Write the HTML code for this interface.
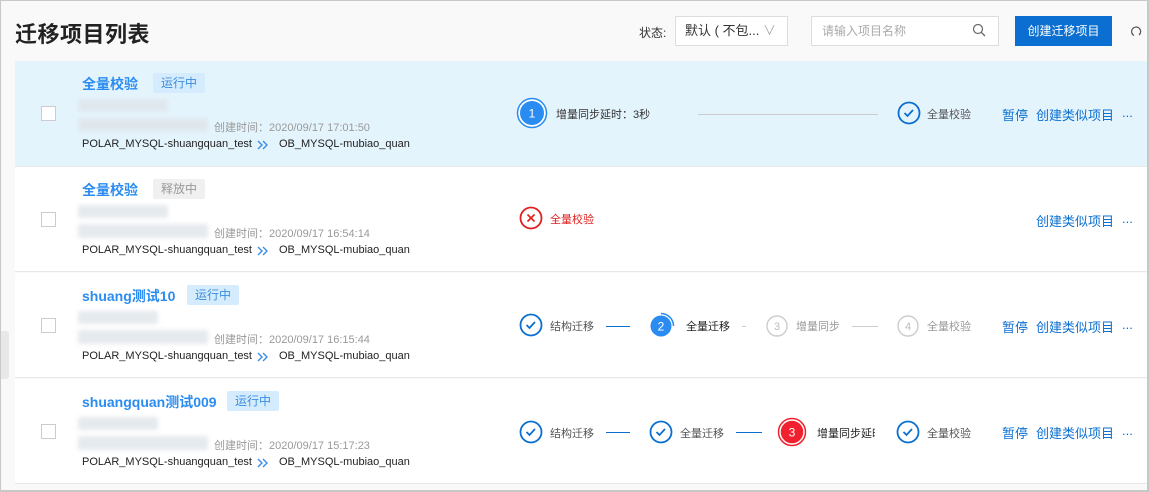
<!DOCTYPE html>
<html><head><meta charset="utf-8"><style>
*{margin:0;padding:0;box-sizing:border-box}
body{width:1149px;height:492px;overflow:hidden;background:#f9f9f9;font-family:"Liberation Sans","Noto Sans CJK SC",sans-serif;position:relative}
.frame{position:absolute;left:0;top:0;width:1149px;height:492px;border:1px solid #c8c8c8;border-right:2px solid #c8c8c8;border-bottom:2px solid #c8c8c8}
.a{position:absolute;white-space:nowrap}
h1{position:absolute;left:15px;top:17px;font-size:22px;font-weight:bold;color:#222;letter-spacing:0.5px}
.row{position:absolute;left:15px;width:1132px;height:105px;background:#fff;border-bottom:1px solid #e8e8e8}
.cb{position:absolute;left:26px;top:45px;width:15px;height:15px;border:1px solid #ccc;background:#fff}
.t{position:absolute;left:67px;top:13px;font-size:14px;font-weight:bold;color:#2a8cf0;white-space:nowrap}
.tag{position:absolute;top:12px;height:20px;line-height:20px;padding:0 8px;font-size:12px;border-radius:2px}
.run{background:#d4ecfd;color:#3b8de0}
.rel{background:#f0f0f0;color:#999}
.bl{position:absolute;left:63px;background:#dfe5ea;filter:blur(2px);opacity:.8}
.ct{position:absolute;left:199px;top:58px;font-size:11px;color:#999;white-space:nowrap}
.src{position:absolute;left:67px;top:77px;font-size:11px;color:#222;white-space:nowrap}
.dst{position:absolute;left:264px;top:77px;font-size:11px;color:#222;white-space:nowrap}
.st{position:absolute;font-size:11px;color:#555;white-space:nowrap}
.ln{position:absolute;height:1px;background:#0a6fd0;width:24px}
.gl{position:absolute;height:1px;background:#ccc}
.act{position:absolute;top:44px;font-size:13px;color:#0a6fd0;white-space:nowrap}
svg{position:absolute}
</style></head><body>
<h1>迁移项目列表</h1>
<div class="a" style="left:639px;top:24px;font-size:12px;color:#333">状态:</div>
<div class="a" style="left:675px;top:16px;width:113px;height:30px;border:1px solid #ddd;background:#fff;font-size:13px;color:#333;line-height:28px;padding-left:9px">默认 ( 不包... <span style="color:#aaa">∨</span></div>
<div class="a" style="left:811px;top:16px;width:188px;height:30px;border:1px solid #ddd;background:#fff;font-size:12px;color:#aaa;line-height:28px;padding-left:10px">请输入项目名称</div>
<svg style="left:972px;top:23px" width="14" height="14" viewBox="0 0 14 14"><circle cx="6" cy="6" r="4.5" fill="none" stroke="#666" stroke-width="1.2"/><path d="M9.3 9.3L13 13" stroke="#666" stroke-width="1.3"/></svg>
<div class="a" style="left:1015px;top:16px;width:97px;height:30px;background:#0a6fd0;color:#fff;font-size:12px;line-height:30px;text-align:center">创建迁移项目</div>
<svg style="left:1130px;top:25px" width="12" height="12" viewBox="0 0 12 12"><path d="M4 10.5A4.5 4.5 0 1 1 9 10" fill="none" stroke="#555" stroke-width="1.2"/></svg>

<div class="row" style="top:61px;background:#e4f4fd;height:106px">
<div class="cb" style="top:45px"></div>
<div class="t">全量校验</div><div class="tag run" style="left:138px">运行中</div>
<div class="bl" style="top:38px;width:90px;height:13px"></div><div class="bl" style="top:57px;width:130px;height:14px"></div>
<div class="ct" style="top:58px">创建时间：2020/09/17 17:01:50</div>
<div class="src">POLAR_MYSQL-shuangquan_test</div><svg style="left:242px;top:79px" width="12" height="10"><path d="M1 1l4 4-4 4M6 1l4 4-4 4" fill="none" stroke="#3b8de0" stroke-width="1.4"/></svg><div class="dst">OB_MYSQL-mubiao_quan</div>
<svg style="left:501px;top:36px" width="32" height="32"><circle cx="16" cy="16" r="13" fill="#2a8cf0" stroke="#fff" stroke-width="2"/><circle cx="16" cy="16" r="14.5" fill="none" stroke="#2a8cf0" stroke-width="1.5"/><text x="16" y="20.5" font-size="12" fill="#fff" text-anchor="middle" font-family="Liberation Sans">1</text></svg>
<div class="st" style="left:541px;top:45px;color:#333">增量同步延时：3秒</div>
<div class="gl" style="left:683px;top:53px;width:180px"></div>
<svg style="left:882px;top:40px" width="24" height="24"><circle cx="12" cy="12" r="10.5" fill="none" stroke="#0a6fd0" stroke-width="1.8"/><path d="M7.5 12l3 3 5.5-6" fill="none" stroke="#0a6fd0" stroke-width="1.8"/></svg>
<div class="st" style="left:912px;top:45px">全量校验</div>
<div class="act" style="left:987px">暂停</div><div class="act" style="left:1021px">创建类似项目</div><div class="act" style="left:1107px">...</div>
</div>

<div class="row" style="top:167px">
<div class="cb"></div>
<div class="t">全量校验</div><div class="tag rel" style="left:138px">释放中</div>
<div class="bl" style="top:38px;width:90px;height:13px"></div><div class="bl" style="top:57px;width:130px;height:14px"></div>
<div class="ct">创建时间：2020/09/17 16:54:14</div>
<div class="src">POLAR_MYSQL-shuangquan_test</div><svg style="left:242px;top:79px" width="12" height="10"><path d="M1 1l4 4-4 4M6 1l4 4-4 4" fill="none" stroke="#3b8de0" stroke-width="1.4"/></svg><div class="dst">OB_MYSQL-mubiao_quan</div>
<svg style="left:504px;top:39px" width="24" height="24"><circle cx="12" cy="12" r="10.5" fill="none" stroke="#e02020" stroke-width="1.8"/><path d="M8.5 8.5l7 7M15.5 8.5l-7 7" stroke="#e02020" stroke-width="1.6"/></svg>
<div class="st" style="left:535px;top:44px;color:#e02020">全量校验</div>
<div class="act" style="left:1021px">创建类似项目</div><div class="act" style="left:1107px">...</div>
</div>

<div class="row" style="top:273px">
<div class="cb"></div>
<div class="t">shuang测试10</div><div class="tag run" style="left:172px">运行中</div>
<div class="bl" style="top:38px;width:80px;height:13px"></div><div class="bl" style="top:57px;width:130px;height:14px"></div>
<div class="ct">创建时间：2020/09/17 16:15:44</div>
<div class="src">POLAR_MYSQL-shuangquan_test</div><svg style="left:242px;top:79px" width="12" height="10"><path d="M1 1l4 4-4 4M6 1l4 4-4 4" fill="none" stroke="#3b8de0" stroke-width="1.4"/></svg><div class="dst">OB_MYSQL-mubiao_quan</div>
<svg style="left:504px;top:40px" width="24" height="24"><circle cx="12" cy="12" r="10.5" fill="none" stroke="#0a6fd0" stroke-width="1.8"/><path d="M7.5 12l3 3 5.5-6" fill="none" stroke="#0a6fd0" stroke-width="1.8"/></svg>
<div class="st" style="left:535px;top:45px">结构迁移</div>
<div class="ln" style="left:591px;top:53px"></div>
<svg style="left:632px;top:38px" width="30" height="30"><circle cx="14" cy="15" r="10.5" fill="#2a8cf0"/><path d="M14 2.5A12.5 12.5 0 0 1 26.5 15" fill="none" stroke="#2a8cf0" stroke-width="1.5"/><text x="14" y="19.5" font-size="12" fill="#fff" text-anchor="middle" font-family="Liberation Sans">2</text></svg>
<div class="st" style="left:671px;top:45px;color:#222">全量迁移</div>
<div class="gl" style="left:727px;top:53px;width:4px"></div>
<svg style="left:750px;top:41px" width="24" height="24"><circle cx="12" cy="12" r="10" fill="none" stroke="#ccc" stroke-width="1.4"/><text x="12" y="16" font-size="11" fill="#bbb" text-anchor="middle" font-family="Liberation Sans">3</text></svg>
<div class="st" style="left:781px;top:45px;color:#999">增量同步</div>
<div class="gl" style="left:837px;top:53px;width:26px"></div>
<svg style="left:881px;top:41px" width="24" height="24"><circle cx="12" cy="12" r="10" fill="none" stroke="#ccc" stroke-width="1.4"/><text x="12" y="16" font-size="11" fill="#bbb" text-anchor="middle" font-family="Liberation Sans">4</text></svg>
<div class="st" style="left:912px;top:45px;color:#999">全量校验</div>
<div class="act" style="left:987px">暂停</div><div class="act" style="left:1021px">创建类似项目</div><div class="act" style="left:1107px">...</div>
</div>

<div class="row" style="top:379px">
<div class="cb"></div>
<div class="t">shuangquan测试009</div><div class="tag run" style="left:212px">运行中</div>
<div class="bl" style="top:38px;width:80px;height:13px"></div><div class="bl" style="top:57px;width:130px;height:14px"></div>
<div class="ct">创建时间：2020/09/17 15:17:23</div>
<div class="src">POLAR_MYSQL-shuangquan_test</div><svg style="left:242px;top:79px" width="12" height="10"><path d="M1 1l4 4-4 4M6 1l4 4-4 4" fill="none" stroke="#3b8de0" stroke-width="1.4"/></svg><div class="dst">OB_MYSQL-mubiao_quan</div>
<svg style="left:504px;top:41px" width="24" height="24"><circle cx="12" cy="12" r="10.5" fill="none" stroke="#0a6fd0" stroke-width="1.8"/><path d="M7.5 12l3 3 5.5-6" fill="none" stroke="#0a6fd0" stroke-width="1.8"/></svg>
<div class="st" style="left:535px;top:46px">结构迁移</div>
<div class="ln" style="left:591px;top:53px"></div>
<svg style="left:634px;top:41px" width="24" height="24"><circle cx="12" cy="12" r="10.5" fill="none" stroke="#0a6fd0" stroke-width="1.8"/><path d="M7.5 12l3 3 5.5-6" fill="none" stroke="#0a6fd0" stroke-width="1.8"/></svg>
<div class="st" style="left:665px;top:46px">全量迁移</div>
<div class="ln" style="left:721px;top:53px;width:26px"></div>
<svg style="left:762px;top:38px" width="30" height="30"><circle cx="15" cy="15" r="12" fill="#f0202e" stroke="#fff" stroke-width="1.5"/><circle cx="15" cy="15" r="13.5" fill="none" stroke="#f0202e" stroke-width="1.5"/><text x="15" y="19.5" font-size="12" fill="#fff" text-anchor="middle" font-family="Liberation Sans">3</text></svg>
<div class="st" style="left:802px;top:46px;color:#222;width:58px;overflow:hidden">增量同步延时</div>
<svg style="left:881px;top:41px" width="24" height="24"><circle cx="12" cy="12" r="10.5" fill="none" stroke="#0a6fd0" stroke-width="1.8"/><path d="M7.5 12l3 3 5.5-6" fill="none" stroke="#0a6fd0" stroke-width="1.8"/></svg>
<div class="st" style="left:912px;top:46px">全量校验</div>
<div class="act" style="left:987px">暂停</div><div class="act" style="left:1021px">创建类似项目</div><div class="act" style="left:1107px">...</div>
</div>
<div class="a" style="left:0;top:331px;width:9px;height:48px;background:#e8e8e8;border-radius:0 3px 3px 0"></div>
<div class="frame"></div>
</body></html>
